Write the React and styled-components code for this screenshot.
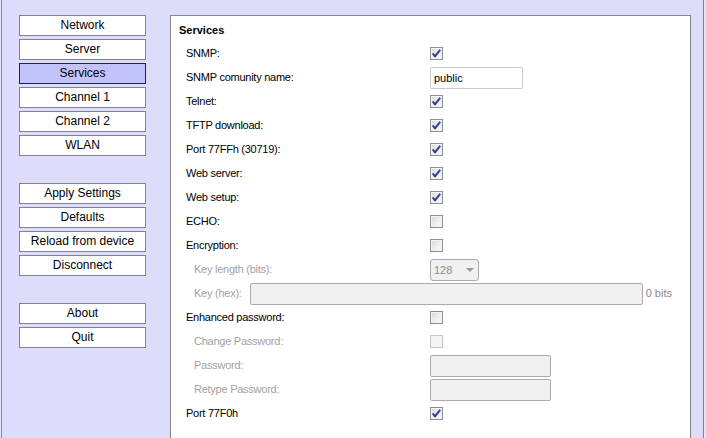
import React from "react";
import styled, { createGlobalStyle } from "styled-components";

const GlobalStyle = createGlobalStyle`
  html, body {
    margin: 0;
    padding: 0;
    height: 438px;
    overflow: hidden;
    background: #e4e4fa;
  }
  * {
    box-sizing: border-box;
  }
`;

const Frame = styled.div`
  display: flex;
  margin-left: 1px;
  width: 703px;
  height: 438px;
  padding: 15px 12px 0 0;
  background: #ddddfb;
  border-left: 1px solid #7e8aa8;
  border-right: 1px solid #80808c;
  font-family: "Liberation Sans", Arial, sans-serif;
`;

const Sidebar = styled.div`
  display: flex;
  flex-direction: column;
  gap: 3px;
  width: 168px;
  flex-shrink: 0;
  padding-left: 17px;
`;

const NavButton = styled.div`
  width: 127px;
  height: 21px;
  display: flex;
  align-items: center;
  justify-content: center;
  padding-bottom: 1px;
  font-size: 12px;
  color: #000;
  background: ${(p) => (p.active ? "#c3c3fb" : "#ffffff")};
  border: 1px solid ${(p) => (p.active ? "#1c1c7c" : "#818190")};
  margin-top: ${(p) => (p.groupStart ? "24px" : "0")};
`;

const Panel = styled.div`
  flex: 1;
  height: 440px;
  background: #fff;
  border: 1px solid #85858c;
  border-bottom: none;
  padding: 7px 8px 0 8px;
`;

const Title = styled.div`
  font-size: 11px;
  font-weight: bold;
  line-height: 14px;
  height: 14px;
  margin-bottom: 4px;
  color: #000;
`;

const Row = styled.div`
  display: flex;
  align-items: center;
  height: 24px;
  padding-left: ${(p) => (p.sub ? "15px" : "7px")};
`;

const Label = styled.div`
  width: ${(p) => (p.sub ? "236px" : "244px")};
  flex-shrink: 0;
  font-size: 11px;
  letter-spacing: -0.25px;
  color: ${(p) => (p.disabled ? "#a2a2a2" : "#000")};
  white-space: nowrap;
`;

const InlineLabel = styled(Label)`
  width: auto;
`;

const Box = styled.span`
  display: inline-flex;
  width: 13px;
  height: 13px;
  border: 1px solid ${(p) => (p.disabled ? "#c6c6c6" : "#8e8f8f")};
  background: ${(p) =>
    p.disabled
      ? "#f4f4f4"
      : "linear-gradient(135deg, #d6d6d6 0%, #ececec 50%, #fbfbfb 100%)"};
  box-shadow: ${(p) => (p.disabled ? "none" : "inset 0 0 0 1px #f4f4f4")};
`;

const TextInput = styled.div`
  height: 22px;
  width: ${(p) => p.w}px;
  display: flex;
  align-items: center;
  padding-left: 3px;
  font-size: 11px;
  color: #000;
  background: ${(p) => (p.disabled ? "#f0f0f0" : "#fff")};
  border: 1px solid ${(p) => (p.disabled ? "#ababab" : "#c9cad6")};
  border-radius: 2px;
  margin-top: 2px;
`;

const KeyInput = styled(TextInput)`
  margin-left: 8px;
`;

const Suffix = styled.span`
  margin-left: 3px;
  font-size: 11px;
  color: #8a8a8a;
`;

const Select = styled.div`
  width: 49px;
  height: 22px;
  display: flex;
  align-items: center;
  justify-content: space-between;
  padding: 0 4px 0 3px;
  font-size: 11px;
  color: #8c8c8c;
  background: #f0f0f0;
  border: 1px solid #ababab;
  border-radius: 3px;
  margin-top: 2px;
`;

const Arrow = styled.span`
  width: 0;
  height: 0;
  border-left: 4px solid transparent;
  border-right: 4px solid transparent;
  border-top: 4px solid #9a9a9a;
`;

const Check = ({ checked, disabled }) => (
  <Box disabled={disabled}>
    {checked && (
      <svg width="11" height="11" viewBox="0 0 11 11">
        <path
          d="M1.8 5.4 L4 8.4 L9.2 1.8"
          fill="none"
          stroke="#33449a"
          strokeWidth="2.1"
          strokeLinejoin="round"
        />
      </svg>
    )}
  </Box>
);

const navTop = ["Network", "Server", "Services", "Channel 1", "Channel 2", "WLAN"];
const navMid = ["Apply Settings", "Defaults", "Reload from device", "Disconnect"];
const navBottom = ["About", "Quit"];

const CheckRow = ({ label, checked }) => (
  <Row>
    <Label>{label}</Label>
    <Check checked={checked} />
  </Row>
);

export default function App() {
  return (
    <>
      <GlobalStyle />
      <Frame>
        <Sidebar>
          {navTop.map((n) => (
            <NavButton key={n} active={n === "Services"}>
              {n}
            </NavButton>
          ))}
          {navMid.map((n, i) => (
            <NavButton key={n} groupStart={i === 0}>
              {n}
            </NavButton>
          ))}
          {navBottom.map((n, i) => (
            <NavButton key={n} groupStart={i === 0}>
              {n}
            </NavButton>
          ))}
        </Sidebar>
        <Panel>
          <Title>Services</Title>
          <CheckRow label="SNMP:" checked />
          <Row>
            <Label>SNMP comunity name:</Label>
            <TextInput w={93}>public</TextInput>
          </Row>
          <CheckRow label="Telnet:" checked />
          <CheckRow label="TFTP download:" checked />
          <CheckRow label="Port 77FFh (30719):" checked />
          <CheckRow label="Web server:" checked />
          <CheckRow label="Web setup:" checked />
          <CheckRow label="ECHO:" />
          <CheckRow label="Encryption:" />
          <Row sub>
            <Label sub disabled>Key length (bits):</Label>
            <Select>
              128
              <Arrow />
            </Select>
          </Row>
          <Row sub>
            <InlineLabel disabled>Key (hex):</InlineLabel>
            <KeyInput w={393} disabled />
            <Suffix>0 bits</Suffix>
          </Row>
          <CheckRow label="Enhanced password:" />
          <Row sub>
            <Label sub disabled>Change Password:</Label>
            <Check disabled />
          </Row>
          <Row sub>
            <Label sub disabled>Password:</Label>
            <TextInput w={121} disabled />
          </Row>
          <Row sub>
            <Label sub disabled>Retype Password:</Label>
            <TextInput w={121} disabled />
          </Row>
          <CheckRow label="Port 77F0h" checked />
        </Panel>
      </Frame>
    </>
  );
}
